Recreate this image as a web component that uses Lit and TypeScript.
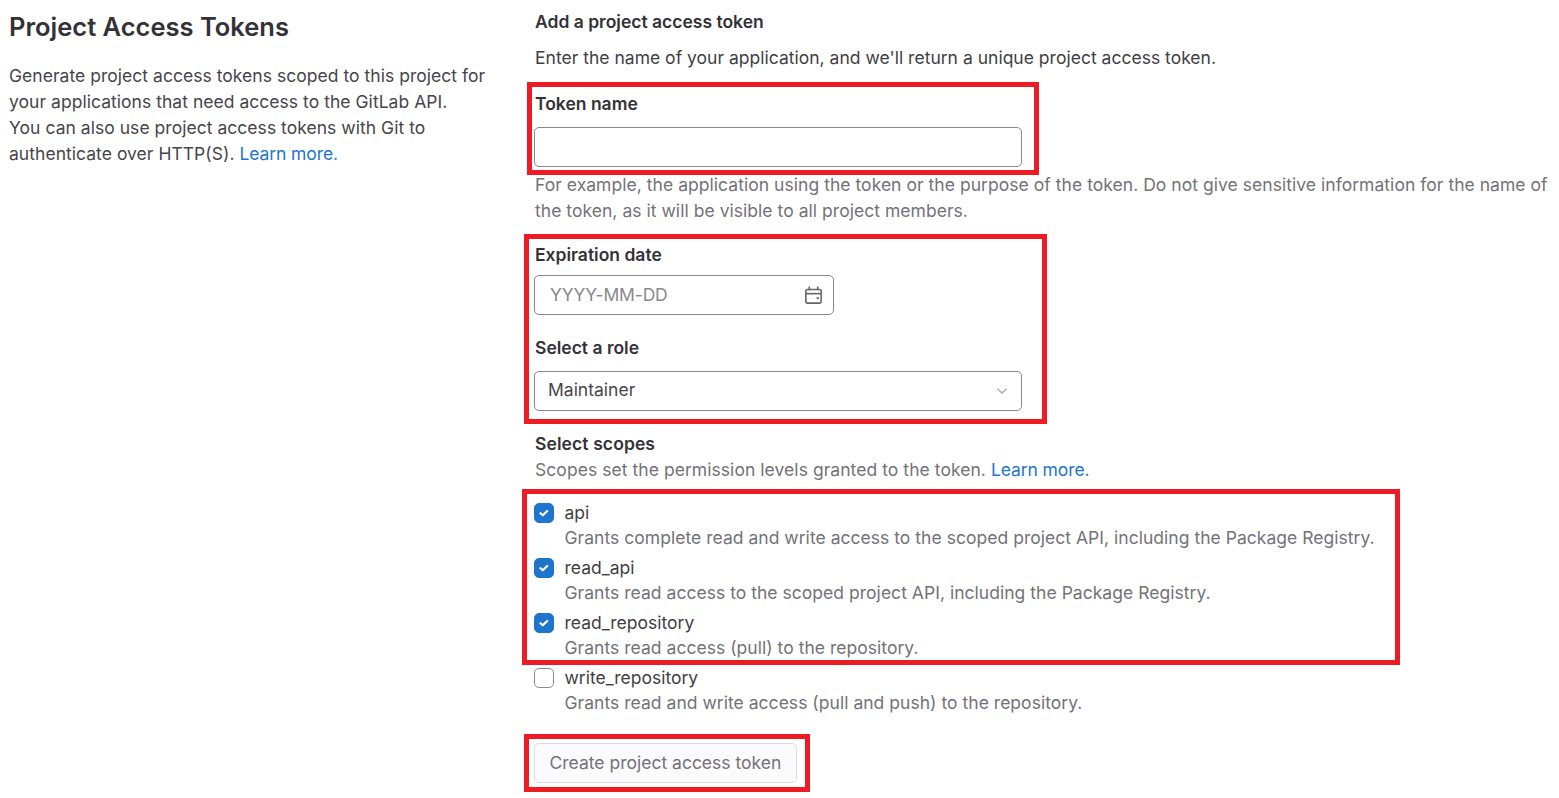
import { html, css, LitElement } from 'lit';
import { customElement } from 'lit/decorators.js';

const scopes = [
  { name: 'api', checked: true, text: 'Grants complete read and write access to the scoped project API, including the Package Registry.' },
  { name: 'read_api', checked: true, text: 'Grants read access to the scoped project API, including the Package Registry.' },
  { name: 'read_repository', checked: true, text: 'Grants read access (pull) to the repository.' },
  { name: 'write_repository', checked: false, text: 'Grants read and write access (pull and push) to the repository.' },
];

@customElement('app-root')
export class AppRoot extends LitElement {
  static styles = css`
    :host {
      display: block;
      position: relative;
      height: 798px;
      overflow: hidden;
      background: #fff;
      font-family: Inter, 'Noto Sans', sans-serif;
      font-size: 17.5px;
      line-height: 26px;
      color: #333238;
    }
    a { color: #1f75cb; text-decoration: none; letter-spacing: -0.1px; }
    .page {
      display: flex;
      padding: 9px 0 0 9px;
    }
    .intro { width: 526px; flex: none; }
    .intro h2 {
      margin: 0 0 20px;
      padding-top: 1px;
      font-size: 25.5px;
      line-height: 33px;
      font-weight: 600;
    }
    .intro p { margin: 0; color: #46454b; letter-spacing: 0.035px; }
    .main { flex: 1; min-width: 0; }
    .label { font-weight: 600; display: block; }
    .lead { margin: 10px 0 0; color: #3f3e44; letter-spacing: 0.012px; }
    .token-label { margin-top: 20px; }
    .input {
      box-sizing: border-box;
      height: 40px;
      width: 488px;
      margin: 10px 0 0 -1px;
      border: 1px solid #89888d;
      border-radius: 5px;
      background: #fff;
      display: flex;
      align-items: center;
    }
    .help { margin: 5px 0 0; color: #737278; letter-spacing: 0.04px; }
    .date-label { margin-top: 18px; }
    .date {
      width: 300px;
      margin-top: 7px;
      padding: 0 10px 0 15px;
      justify-content: space-between;
      color: #89888d;
      letter-spacing: -0.15px;
    }
    .role-label { margin-top: 20px; }
    .select { margin-top: 10px; padding: 0 14px 0 13px; justify-content: space-between; color: #46454b; }
    .select span { padding-bottom: 2px; }
    .scopes-label { margin-top: 20px; letter-spacing: 0.1px; }
    .scopes-help { margin: 0; color: #737278; letter-spacing: 0.055px; }
    .scopes { margin-top: 17px; display: flex; flex-direction: column; gap: 5px; }
    .scope { display: grid; grid-template-columns: 30.5px 1fr; margin-left: -1px; line-height: 25px; }
    .scope .name { color: #3f3e44; }
    .scope .desc { grid-column: 2; color: #737278; letter-spacing: 0.03px; }
    .box {
      box-sizing: border-box;
      width: 20px;
      height: 20px;
      margin-top: 3px;
      border-radius: 5px;
      border: 1px solid #89888d;
      background: #fff;
      display: flex;
      align-items: center;
      justify-content: center;
    }
    .box.on { background: #1f75cb; border-color: #1f75cb; }
    .submit {
      display: block;
      box-sizing: border-box;
      height: 40px;
      margin: 28px 0 0 -1px;
      padding: 0 14.5px;
      border: 1px solid #dcdcde;
      border-radius: 5px;
      background: #fbfafd;
      color: #737278;
      font: inherit;
    }
    .mark {
      position: absolute;
      box-sizing: border-box;
      border: 5px solid #ed1c24;
      pointer-events: none;
    }
  `;

  render() {
    return html`
      <div class="page">
        <section class="intro">
          <h2>Project Access Tokens</h2>
          <p>Generate project access tokens scoped to this project for<br>
            your applications that need access to the GitLab API.<br>
            You can also use project access tokens with Git to<br>
            authenticate over HTTP(S). <a href="#">Learn more.</a></p>
        </section>
        <section class="main">
          <span class="label">Add a project access token</span>
          <p class="lead">Enter the name of your application, and we'll return a unique project access token.</p>
          <span class="label token-label">Token name</span>
          <div class="input"></div>
          <p class="help">For example, the application using the token or the purpose of the token. Do not give sensitive information for the name of the token, as it will be visible to all project members.</p>
          <span class="label date-label">Expiration date</span>
          <div class="input date">
            <span>YYYY-MM-DD</span>
            <svg width="19" height="19" viewBox="0 0 18 18" fill="none" stroke="#666569" stroke-width="1.500">
              <path d="M5 .5V4M13 .5V4"/>
              <rect x="1.750" y="3.250" width="14.500" height="13" rx="1.500"/>
              <path d="M1.750 7.250h14.500"/>
              <rect x="12" y="10.500" width="2" height="2" fill="#666569" stroke="none"/>
            </svg>
          </div>
          <span class="label role-label">Select a role</span>
          <div class="input select">
            <span>Maintainer</span>
            <svg width="10" height="6" viewBox="0 0 10 6" fill="none" stroke="#ababaf" stroke-width="1.500"><path d="M.5 .8L5 5 9.500 .8"/></svg>
          </div>
          <span class="label scopes-label">Select scopes</span>
          <p class="scopes-help">Scopes set the permission levels granted to the token. <a href="#">Learn more.</a></p>
          <div class="scopes">
            ${scopes.map(s => html`
              <div class="scope">
                <span class="box ${s.checked ? 'on' : ''}">
                  ${s.checked ? html`<svg width="10" height="10" viewBox="0 0 10 10" fill="none" stroke="#fff" stroke-width="2.200" stroke-linecap="round" stroke-linejoin="round"><path d="M1.500 5.200l2.300 2.100L8.200 3"/></svg>` : ''}
                </span>
                <span class="name">${s.name}</span>
                <span class="desc">${s.text}</span>
              </div>
            `)}
          </div>
          <button class="submit" disabled>Create project access token</button>
        </section>
      </div>
      <div class="mark" style="left:527px;top:82px;width:512px;height:93px"></div>
      <div class="mark" style="left:524px;top:234px;width:523px;height:190px"></div>
      <div class="mark" style="left:522px;top:489px;width:878px;height:176px"></div>
      <div class="mark" style="left:524px;top:734px;width:286px;height:58px"></div>
    `;
  }
}
